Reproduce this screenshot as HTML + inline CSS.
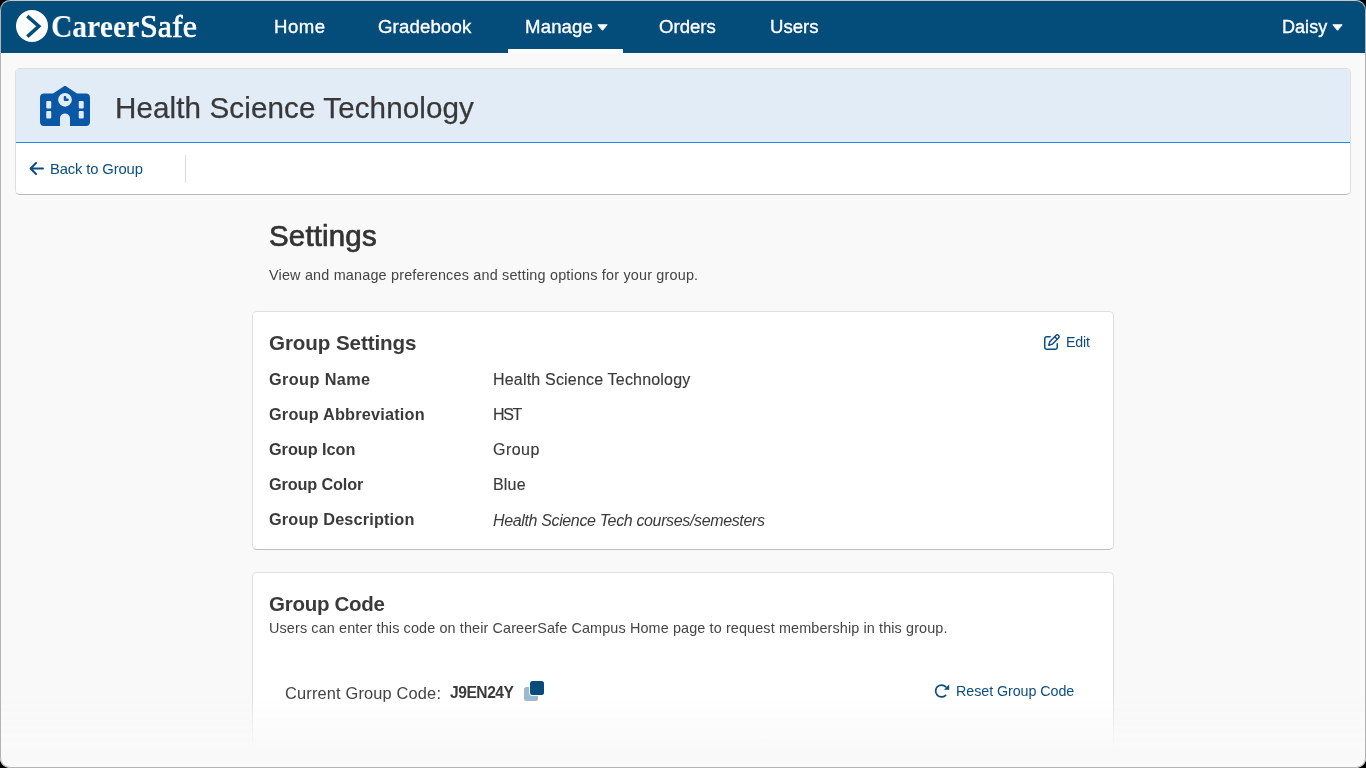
<!DOCTYPE html>
<html><head><meta charset="utf-8"><style>
html,body{margin:0;padding:0;width:1366px;height:768px;overflow:hidden;background:#000}
#win{position:absolute;left:0;top:0;width:1366px;height:768px;border-radius:10px;overflow:hidden;background:#f9f9f9;font-family:"Liberation Sans",sans-serif}
#frame{position:absolute;left:0;top:0;width:1364px;height:766px;border:1px solid #b3b3b3;border-top-color:#ccc5c1;border-radius:10px}
.t{position:absolute;white-space:nowrap;line-height:1;will-change:transform;font-family:"Liberation Sans",sans-serif}
#nav{position:absolute;left:0;top:0;width:1366px;height:53px;background:#044c7a}
#hcard{position:absolute;left:15px;top:68px;width:1334px;height:125px;background:#fff;border:1px solid #dedede;border-bottom-color:#bababa;border-radius:5px;overflow:hidden}
#htop{position:absolute;left:0;top:0;width:100%;height:73px;background:#e2ecf6;border-bottom:1px solid #2188e6}
.card{position:absolute;background:#fff;border:1px solid #e0e0e0;border-bottom-color:#bdbdbd;border-radius:5px}
#fade{position:absolute;left:0;top:698px;width:1366px;height:70px;background:linear-gradient(rgba(249,249,249,0),#f9f9f9 50px)}
</style></head><body><div id="win">
<div id="nav"></div>
<svg style="position:absolute;left:15px;top:9px" width="34" height="34" viewBox="0 0 34 34">
<circle cx="17" cy="17" r="16" fill="#fff"/>
<path d="M12.3 7.1 L23.8 17.2 L12.3 27.6" fill="none" stroke="#044c7a" stroke-width="3.5" stroke-linecap="butt" stroke-linejoin="miter"/>
</svg>
<div class="t" style="left:51px;top:10.41px;font-size:32px;font-weight:bold;font-style:normal;color:#fff;letter-spacing:0px;font-family:'Liberation Serif',serif;transform:scaleX(0.925);transform-origin:0 0;">Career</div>
<div class="t" style="left:140px;top:10.41px;font-size:32px;font-weight:normal;font-style:normal;color:#fff;letter-spacing:0px;font-family:'Liberation Serif',serif;-webkit-text-stroke:0.7px #fff;">Safe</div>
<div class="t" style="left:273.5px;top:17.86px;font-size:18.6px;font-weight:normal;font-style:normal;color:#fff;letter-spacing:0.5px;-webkit-text-stroke:0.35px #fff;">Home</div>
<div class="t" style="left:377.5px;top:17.86px;font-size:18.6px;font-weight:normal;font-style:normal;color:#fff;letter-spacing:0.15px;-webkit-text-stroke:0.35px #fff;">Gradebook</div>
<div class="t" style="left:524.5px;top:17.86px;font-size:18.6px;font-weight:normal;font-style:normal;color:#fff;letter-spacing:0.15px;-webkit-text-stroke:0.35px #fff;">Manage</div>
<div class="t" style="left:659px;top:17.86px;font-size:18.6px;font-weight:normal;font-style:normal;color:#fff;letter-spacing:0px;-webkit-text-stroke:0.35px #fff;">Orders</div>
<div class="t" style="left:769.5px;top:17.86px;font-size:18.6px;font-weight:normal;font-style:normal;color:#fff;letter-spacing:0px;-webkit-text-stroke:0.35px #fff;">Users</div>
<div class="t" style="left:1282px;top:18.36px;font-size:18px;font-weight:normal;font-style:normal;color:#fff;letter-spacing:0.05px;-webkit-text-stroke:0.35px #fff;">Daisy</div>
<svg style="position:absolute;left:596.5px;top:24px" width="11" height="7" viewBox="0 0 11 7"><path d="M0.8 0.8 H10.2 L5.5 6.3 Z" fill="#fff" stroke="#fff" stroke-width="1" stroke-linejoin="round"/></svg>
<svg style="position:absolute;left:1331.5px;top:23.9px" width="11" height="7" viewBox="0 0 11 7"><path d="M0.8 0.8 H10.2 L5.5 6.3 Z" fill="#fff" stroke="#fff" stroke-width="1" stroke-linejoin="round"/></svg>
<div style="position:absolute;left:508px;top:49px;width:115px;height:4px;background:#fff"></div>
<div id="hcard"><div id="htop"></div></div>
<svg style="position:absolute;left:40px;top:86px" width="50" height="40" viewBox="0 0 640 512"><path fill="#0a57a6" d="M337.8 5.4C327-1.8 313-1.8 302.2 5.4L166.3 96H48C21.5 96 0 117.5 0 144V464c0 26.5 21.5 48 48 48H256V416c0-35.3 28.7-64 64-64s64 28.7 64 64v96H592c26.5 0 48-21.5 48-48V144c0-26.5-21.5-48-48-48H473.7L337.8 5.4zM96 192h32c8.8 0 16 7.2 16 16v64c0 8.8-7.2 16-16 16H96c-8.8 0-16-7.2-16-16V208c0-8.8 7.2-16 16-16zm400 16c0-8.8 7.2-16 16-16h32c8.8 0 16 7.2 16 16v64c0 8.8-7.2 16-16 16H512c-8.8 0-16-7.2-16-16V208zM96 320h32c8.8 0 16 7.2 16 16v64c0 8.8-7.2 16-16 16H96c-8.8 0-16-7.2-16-16V336c0-8.8 7.2-16 16-16zm400 16c0-8.8 7.2-16 16-16h32c8.8 0 16 7.2 16 16v64c0 8.8-7.2 16-16 16H512c-8.8 0-16-7.2-16-16V336zM232 176a88 88 0 1 1 176 0 88 88 0 1 1 -176 0zm88-48c-8.8 0-16 7.2-16 16v32c0 8.8 7.2 16 16 16h32c8.8 0 16-7.2 16-16s-7.2-16-16-16H336V144c0-8.8-7.2-16-16-16z"/></svg>
<div class="t" style="left:115px;top:92.94px;font-size:29.6px;font-weight:normal;font-style:normal;color:#383838;letter-spacing:0.1px;-webkit-text-stroke:0.25px #383838;">Health Science Technology</div>
<svg style="position:absolute;left:29px;top:162px" width="15" height="13" viewBox="0 0 15 13"><path d="M7 1 L1.6 6.5 L7 12 M1.8 6.5 H14" fill="none" stroke="#0b4d80" stroke-width="2" stroke-linecap="round" stroke-linejoin="round"/></svg>
<div class="t" style="left:49.8px;top:161.67px;font-size:14.8px;font-weight:normal;font-style:normal;color:#0b4d80;letter-spacing:-0.14px;">Back to Group</div>
<div style="position:absolute;left:185px;top:155px;width:1px;height:28px;background:#dcdcdc"></div>
<div class="t" style="left:269px;top:220.73px;font-size:29.5px;font-weight:normal;font-style:normal;color:#333;letter-spacing:0.15px;-webkit-text-stroke:0.7px #333;">Settings</div>
<div class="t" style="left:269px;top:267.61px;font-size:14.4px;font-weight:normal;font-style:normal;color:#444;letter-spacing:0.19px;">View and manage preferences and setting options for your group.</div>
<div class="card" style="left:252px;top:311px;width:860px;height:237px"></div>
<div class="t" style="left:269px;top:333.06px;font-size:20.6px;font-weight:bold;font-style:normal;color:#3a3a3a;letter-spacing:-0.1px;">Group Settings</div>
<svg style="position:absolute;left:1044px;top:334px" width="16" height="16" viewBox="0 0 512 512"><path fill="#0b4d80" d="M441 58.9L453.1 71c9.4 9.4 9.4 24.6 0 33.9L424 134.1 377.9 88 407 58.9c9.4-9.4 24.6-9.4 33.9 0zM209.8 256.2L344 121.9 390.1 168 255.8 302.2c-2.9 2.9-6.5 5-10.4 6.1l-58.5 16.7 16.7-58.5c1.1-3.9 3.2-7.5 6.1-10.4zM373.1 25L175.8 222.2c-8.7 8.7-15 19.4-18.3 31.1l-28.6 100c-2.4 8.4-.1 17.4 6.1 23.6s15.2 8.5 23.6 6.1l100-28.6c11.8-3.4 22.5-9.7 31.1-18.3L487 138.9c28.1-28.1 28.1-73.8 0-101.8L474.9 25C446.8-3.1 401.2-3.1 373.1 25zM88 64C39.4 64 0 103.4 0 152V424c0 48.6 39.4 88 88 88H360c48.6 0 88-39.4 88-88V312c0-13.3-10.7-24-24-24s-24 10.7-24 24V424c0 22.1-17.9 40-40 40H88c-22.1 0-40-17.9-40-40V152c0-22.1 17.9-40 40-40H200c13.3 0 24-10.7 24-24s-10.7-24-24-24H88z"/></svg>
<div class="t" style="left:1066px;top:335.08px;font-size:14.2px;font-weight:normal;font-style:normal;color:#0b4d80;letter-spacing:-0.2px;">Edit</div>
<div class="t" style="left:269px;top:371.20px;font-size:16.3px;font-weight:bold;font-style:normal;color:#3a3a3a;letter-spacing:0.38px;">Group Name</div>
<div class="t" style="left:493px;top:372.26px;font-size:16.0px;font-weight:normal;font-style:normal;color:#3a3a3a;letter-spacing:0.19px;-webkit-text-stroke:0.15px #3a3a3a;">Health Science Technology</div>
<div class="t" style="left:269px;top:406.20px;font-size:16.3px;font-weight:bold;font-style:normal;color:#3a3a3a;letter-spacing:0.2px;">Group Abbreviation</div>
<div class="t" style="left:493px;top:407.26px;font-size:16.0px;font-weight:normal;font-style:normal;color:#3a3a3a;letter-spacing:-1.33px;-webkit-text-stroke:0.15px #3a3a3a;">HST</div>
<div class="t" style="left:269px;top:441.20px;font-size:16.3px;font-weight:bold;font-style:normal;color:#3a3a3a;letter-spacing:-0.05px;">Group Icon</div>
<div class="t" style="left:493px;top:442.26px;font-size:16.0px;font-weight:normal;font-style:normal;color:#3a3a3a;letter-spacing:0.47px;-webkit-text-stroke:0.15px #3a3a3a;">Group</div>
<div class="t" style="left:269px;top:476.20px;font-size:16.3px;font-weight:bold;font-style:normal;color:#3a3a3a;letter-spacing:-0.15px;">Group Color</div>
<div class="t" style="left:493px;top:477.26px;font-size:16.0px;font-weight:normal;font-style:normal;color:#3a3a3a;letter-spacing:0.17px;-webkit-text-stroke:0.15px #3a3a3a;">Blue</div>
<div class="t" style="left:269px;top:511.20px;font-size:16.3px;font-weight:bold;font-style:normal;color:#3a3a3a;letter-spacing:0.15px;">Group Description</div>
<div class="t" style="left:493px;top:513.26px;font-size:16.0px;font-weight:normal;font-style:italic;color:#3a3a3a;letter-spacing:-0.36px;">Health Science Tech courses/semesters</div>
<div class="card" style="left:252px;top:572px;width:860px;height:260px"></div>
<div class="t" style="left:269px;top:594.15px;font-size:20.5px;font-weight:bold;font-style:normal;color:#3a3a3a;letter-spacing:-0.27px;">Group Code</div>
<div class="t" style="left:269px;top:620.51px;font-size:14.4px;font-weight:normal;font-style:normal;color:#444;letter-spacing:0.124px;">Users can enter this code on their CareerSafe Campus Home page to request membership in this group.</div>
<div class="t" style="left:285px;top:684.82px;font-size:16.4px;font-weight:normal;font-style:normal;color:#444;letter-spacing:0.16px;">Current Group Code:</div>
<div class="t" style="left:450px;top:685.49px;font-size:15.6px;font-weight:bold;font-style:normal;color:#3a3a3a;letter-spacing:-0.47px;">J9EN24Y</div>
<svg style="position:absolute;left:523px;top:680px" width="22" height="22" viewBox="0 0 22 22">
<defs><mask id="m"><rect width="22" height="22" fill="#fff"/><rect x="6.1" y="0.1" width="15.8" height="15.8" rx="3.4" fill="#000"/></mask></defs>
<rect x="1" y="7" width="14" height="14" rx="2.5" fill="#9cb9d0" mask="url(#m)"/>
<rect x="7" y="1" width="14" height="14" rx="2.5" fill="#054c7b"/>
</svg>
<svg style="position:absolute;left:930px;top:680px" width="24" height="22" viewBox="0 0 24 22"><path d="M15.6 15.3 A5.9 5.9 0 1 1 15.8 6.9" fill="none" stroke="#0b4d80" stroke-width="1.75" stroke-linecap="round"/><path d="M19.2 4.4 L19.2 9.7 L13.9 9.7 Z" fill="#0b4d80"/></svg>
<div class="t" style="left:956px;top:683.70px;font-size:14.3px;font-weight:normal;font-style:normal;color:#0b4d80;letter-spacing:-0.06px;">Reset Group Code</div>
<div id="fade"></div>
<div id="frame"></div>
</div></body></html>
